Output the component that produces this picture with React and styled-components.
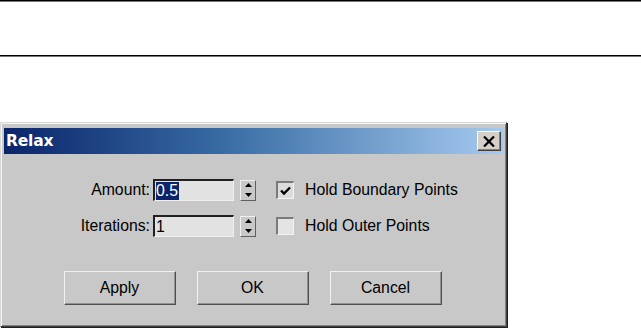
import React from "react";
import styled, { createGlobalStyle } from "styled-components";

const Global = createGlobalStyle`
  html, body {
    margin: 0;
    padding: 0;
    background: #ffffff;
  }
  body {
    font-family: "Liberation Sans", Arial, sans-serif;
    width: 641px;
    height: 329px;
    overflow: hidden;
  }
`;

const Page = styled.div`
  display: flex;
  flex-direction: column;
`;

const Rule = styled.div`
  height: 1px;
  background: #000000;
  box-shadow: 0 1px 0 #777777;
  margin-bottom: ${(props) => props.after || 0}px;
`;

const Dialog = styled.div`
  width: 507px;
  box-sizing: border-box;
  background: #c8c8c8;
  border-top: 1px solid #d8d8d8;
  border-left: 1px solid #d8d8d8;
  border-right: 1px solid #404040;
  border-bottom: 1px solid #404040;
  box-shadow: inset 1px 1px 0 #f4f4f4, inset -1px -1px 0 #808080,
    1px 1px 0 #202020;
  padding: 5px 3px 21px 3px;
  display: flex;
  flex-direction: column;
`;

const TitleBar = styled.div`
  height: 26px;
  display: flex;
  align-items: center;
  justify-content: space-between;
  padding: 0 2px 0 2px;
  background: linear-gradient(90deg, #0a246a 0%, #3a6ea5 45%, #a6caf0 100%);
`;

const Title = styled.span`
  color: #ffffff;
  font-family: "DejaVu Sans", Verdana, sans-serif;
  font-weight: bold;
  font-size: 15.5px;
  letter-spacing: -0.2px;
`;

const CloseButton = styled.button`
  width: 24px;
  height: 20px;
  padding: 0;
  display: flex;
  align-items: center;
  justify-content: center;
  background: #d4d0c8;
  border: 1px solid;
  border-color: #ffffff #404040 #404040 #ffffff;
  box-shadow: inset -1px -1px 0 #808080;
`;

const Form = styled.div`
  display: grid;
  grid-template-columns: 146px 80px 16px auto;
  column-gap: 4px;
  row-gap: 14px;
  align-items: center;
  margin-top: 25px;
`;

const Label = styled.span`
  text-align: right;
  font-size: 15.8px;
  color: #000000;
`;

const Field = styled.div`
  height: 22px;
  box-sizing: border-box;
  margin-left: -1px;
  background: #e2e2e2;
  border-top: 2px solid #202020;
  border-left: 2px solid #202020;
  border-right: 1px solid #f0f0f0;
  border-bottom: 1px solid #f0f0f0;
  display: flex;
  align-items: center;
  padding-left: 1px;
  font-size: 15.8px;
`;

const Selected = styled.span`
  background: ${(props) => (props.selected ? "#0a246a" : "transparent")};
  color: ${(props) => (props.selected ? "#ffffff" : "#000000")};
  line-height: 18px;
  padding-right: 1px;
`;

const Spinner = styled.div`
  margin-left: 2px;
  width: 16px;
  height: 21px;
  box-sizing: border-box;
  display: flex;
  flex-direction: column;
  background: #c8c8c8;
  border: 1px solid;
  border-color: #f0f0f0 #606060 #606060 #f0f0f0;
`;

const SpinHalf = styled.div`
  flex: 1;
  display: flex;
  align-items: center;
  justify-content: center;
`;

const Check = styled.label`
  display: flex;
  align-items: center;
  gap: 11px;
  margin-left: 18px;
  font-size: 15.8px;
  color: #000000;
`;

const Box = styled.span`
  width: 18px;
  height: 18px;
  box-sizing: border-box;
  background: ${(props) => (props.checked ? "#dcdcdc" : "#e4e4e4")};
  border-top: 2px solid #7a7a7a;
  border-left: 2px solid #7a7a7a;
  border-right: 1px solid #f4f4f4;
  border-bottom: 1px solid #f4f4f4;
  display: flex;
  align-items: center;
  justify-content: center;
`;

const Buttons = styled.div`
  display: flex;
  justify-content: center;
  gap: 21px;
  margin-top: 34px;
  padding-right: 2px;
`;

const Button = styled.button`
  width: 112px;
  height: 34px;
  background: #c8c8c8;
  font-family: "Liberation Sans", Arial, sans-serif;
  font-size: 15.8px;
  color: #000000;
  border: 1px solid;
  border-color: #f0f0f0 #505050 #505050 #f0f0f0;
  box-shadow: inset -1px -1px 0 #909090;
  padding: 0;
`;

const Arrow = ({ up }) => (
  <svg width="7" height="4" viewBox="0 0 7 4">
    <path d={up ? "M3.5 0 L7 4 L0 4 Z" : "M0 0 L7 0 L3.5 4 Z"} fill="#000" />
  </svg>
);

const Spin = () => (
  <Spinner>
    <SpinHalf>
      <Arrow up />
    </SpinHalf>
    <SpinHalf>
      <Arrow />
    </SpinHalf>
  </Spinner>
);

const CheckMark = () => (
  <svg width="11" height="10" viewBox="0 0 11 10">
    <path d="M1 4.5 L4 7.5 L10 1.5" stroke="#000" strokeWidth="2.4" fill="none" />
  </svg>
);

export default function App() {
  return (
    <Page>
      <Global />
      <Rule after={54} />
      <Rule after={66} />
      <Dialog>
        <TitleBar>
          <Title>Relax</Title>
          <CloseButton>
            <svg width="12" height="11" viewBox="0 0 12 11">
              <path
                d="M1 0.5 L11 10.5 M11 0.5 L1 10.5"
                stroke="#000"
                strokeWidth="2.2"
              />
            </svg>
          </CloseButton>
        </TitleBar>
        <Form>
          <Label>Amount:</Label>
          <Field>
            <Selected selected>0.5</Selected>
          </Field>
          <Spin />
          <Check>
            <Box checked>
              <CheckMark />
            </Box>
            Hold Boundary Points
          </Check>
          <Label>Iterations:</Label>
          <Field>
            <Selected>1</Selected>
          </Field>
          <Spin />
          <Check>
            <Box />
            Hold Outer Points
          </Check>
        </Form>
        <Buttons>
          <Button>Apply</Button>
          <Button>OK</Button>
          <Button>Cancel</Button>
        </Buttons>
      </Dialog>
    </Page>
  );
}
